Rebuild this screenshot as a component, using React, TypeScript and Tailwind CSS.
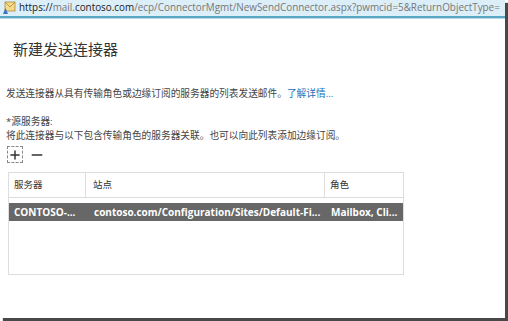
import { Plus, Minus } from 'lucide-react'

const font = { fontFamily: '"Open Sans", "Noto Sans CJK SC", sans-serif' }

function PageIcon() {
  return (
    <svg width="14" height="14" viewBox="0 0 14 14" className="shrink-0">
      <rect x="3" y="1" width="10" height="9" fill="#f3d98a" stroke="#b08a3a" strokeWidth="0.8" />
      <path d="M3 1 L8 6 L13 1" fill="none" stroke="#b08a3a" strokeWidth="0.8" />
      <path d="M1 13 L6 13 L3.5 7 Z" fill="#3a73c4" />
    </svg>
  )
}

export default function App() {
  return (
    <div className="w-[508px] h-[321px] bg-white overflow-hidden" style={font}>
      <div className="w-[505px] h-[318px] bg-white flex flex-col shadow-[3px_3px_1px_rgba(40,40,40,0.85)]">
        {/* ADDRESS BAR */}
        <div className="h-[16px] bg-[#dceef8] flex items-center gap-[3px] pl-[2px] overflow-hidden whitespace-nowrap text-[9.9px] leading-none">
          <PageIcon />
          <span className="text-[#222]">
            https://<span className="text-[#777]">mail.</span>contoso.com
            <span className="text-[#777]">/ecp/ConnectorMgmt/NewSendConnector.aspx?pwmcid=5&amp;ReturnObjectType=</span>
          </span>
        </div>
        <div className="h-[2px] bg-[#5aa7c6]" />
        <div className="h-[1px] bg-[#b9dcea]" />

        {/* TITLE */}
        <h1 className="mt-[20px] ml-[13px] text-[15px] leading-[20px] text-[#333]">新建发送连接器</h1>

        {/* DESCRIPTION */}
        <p className="mt-[28px] ml-[6px] text-[9.7px] leading-[14px] text-[#444]">
          发送连接器从具有传输角色或边缘订阅的服务器的列表发送邮件。
          <span className="text-[#1d6fb8]">了解详情...</span>
        </p>

        <div className="mt-[14px] ml-[6px] text-[9.7px] leading-[14px] text-[#444]">
          <div>*源服务器:</div>
          <div>将此连接器与以下包含传输角色的服务器关联。也可以向此列表添加边缘订阅。</div>
        </div>

        {/* TOOLBAR */}
        <div className="mt-[3px] ml-[7px] flex items-center gap-[6px] text-[#333]">
          <div className="w-[16px] h-[17px] border border-dashed border-[#888] flex items-center justify-center">
            <Plus size={16} strokeWidth={2.5} />
          </div>
          <Minus size={16} strokeWidth={2.5} />
        </div>

        {/* TABLE */}
        <div className="mt-[9px] ml-[8px] w-[396px] h-[103px] border border-[#ddd]">
          <div className="h-[25px] flex border-b border-[#ddd] text-[9.5px] text-[#333]">
            <div className="w-[77px] border-r border-[#ddd] flex items-center pl-[5px]">服务器</div>
            <div className="w-[239px] border-r border-[#ddd] flex items-center pl-[7px]">站点</div>
            <div className="flex-1 flex items-center pl-[5px]">角色</div>
          </div>
          <div className="mt-[5px] h-[18px] bg-[#676767] flex items-center text-white font-bold text-[10px] whitespace-nowrap">
            <div className="w-[77px] pl-[5px]">CONTOSO-...</div>
            <div className="w-[239px] pl-[8px]">contoso.com/Configuration/Sites/Default-Fi...</div>
            <div className="flex-1 pl-[6px]">Mailbox, Cli...</div>
          </div>
        </div>
      </div>
    </div>
  )
}
